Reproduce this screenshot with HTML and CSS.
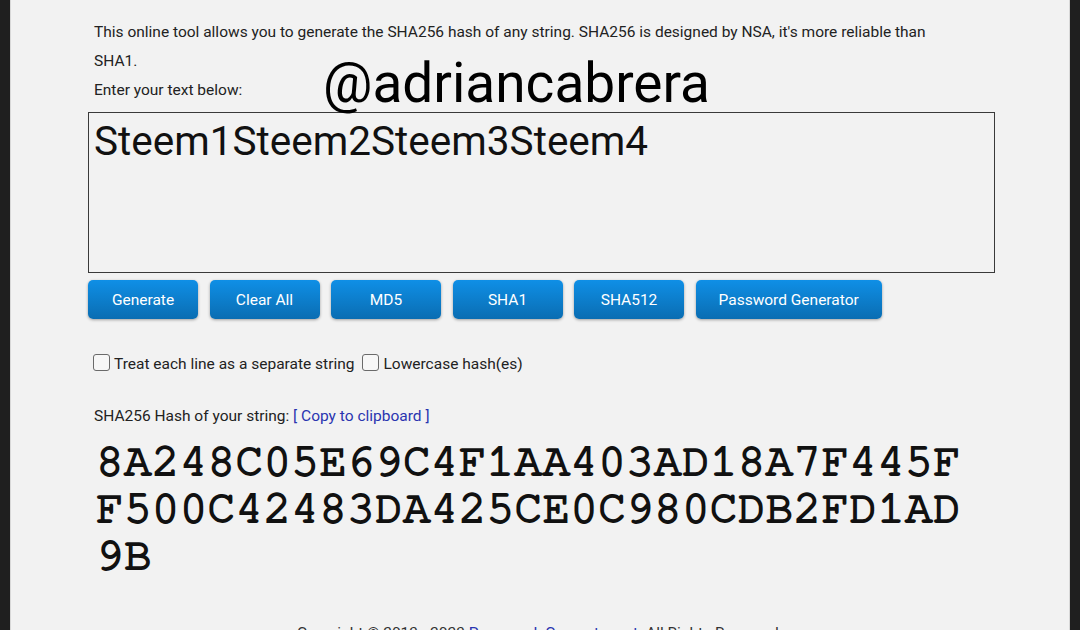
FILE: index.html
```html
<!DOCTYPE html>
<html lang="en">
<head>
<meta charset="utf-8">
<title>SHA256 Hash Generator</title>
<link rel="stylesheet" href="styles.css">
</head>
<body>
<div class="page">
  <div class="content">
    <p class="intro">This online tool allows you to generate the SHA256 hash of any string. SHA256 is designed by NSA, it's more reliable than SHA1.</p>
    <p class="intro">Enter your text below:</p>
    <div class="watermark">@adriancabrera</div>
    <div class="form">
      <div class="textarea">Steem1Steem2Steem3Steem4</div>
      <div class="buttons">
        <span class="btn">Generate</span>
        <span class="btn">Clear All</span>
        <span class="btn">MD5</span>
        <span class="btn">SHA1</span>
        <span class="btn">SHA512</span>
        <span class="btn">Password Generator</span>
      </div>
    </div>
    <div class="options">
      <span class="check"></span><span class="opt-label">Treat each line as a separate string</span>
      <span class="check"></span><span class="opt-label">Lowercase hash(es)</span>
    </div>
    <p class="result-label">SHA256 Hash of your string: <span class="link">[ Copy to clipboard ]</span></p>
    <div class="hash">8A248C05E69C4F1AA403AD18A7F445FF500C42483DA425CE0C980CDB2FD1AD9B</div>
    <div class="footer">Copyright © 2013 - 2023 <span class="link">PasswordsGenerator.net</span>. All Rights Reserved.</div>
  </div>
</div>
</body>
</html>
```

FILE: styles.css
```css
html, body {
  margin: 0;
  padding: 0;
  background: #1f1f1f;
  height: 630px;
  overflow: hidden;
}
.page {
  margin: 0 10px;
  height: 630px;
  background: #f2f2f2;
  overflow: hidden;
  border-left: 1px solid #d8d8d8;
  border-right: 1px solid #d8d8d8;
}
.content {
  position: relative;
  padding: 18px 0 0 77px;
  font-family: Roboto, "Noto Sans", sans-serif;
  font-size: 15.5px;
  color: #222;
}
.intro {
  margin: 0 0 0 6px;
  width: 850px;
  line-height: 29px;
}
.watermark {
  position: absolute;
  left: 312px;
  top: 50px;
  font-size: 55px;
  line-height: 66px;
  color: #000;
}
.form {
  margin-top: 7px;
}
.textarea {
  box-sizing: border-box;
  width: 907px;
  height: 161px;
  border: 1px solid #3a3a3a;
  padding: 6px 5px;
  font-size: 40.5px;
  line-height: 44px;
  color: #111;
}
.buttons {
  display: flex;
  gap: 11.5px;
  margin-top: 7px;
}
.btn {
  box-sizing: border-box;
  min-width: 110px;
  height: 39px;
  padding: 0 23px;
  display: flex;
  align-items: center;
  justify-content: center;
  border-radius: 5px;
  background: linear-gradient(#0f8fe6, #0a6db2);
  box-shadow: 0 1px 3px rgba(0,0,0,0.35);
  color: #fff;
}
.options {
  display: flex;
  align-items: center;
  margin: 35px 0 0 5px;
  color: #222;
}
.check {
  box-sizing: border-box;
  width: 17px;
  height: 17px;
  border: 1px solid #6a6a6a;
  border-radius: 3px;
  background: #f7f7f7;
  margin-top: -3px;
  margin-right: 4px;
}
.opt-label {
  margin-right: 8px;
  line-height: 20px;
}
.result-label {
  margin: 32px 0 0 6px;
  line-height: 20px;
}
.link {
  color: #2a35b0;
}
.hash {
  margin: 12px 0 0 8px;
  width: 880px;
  word-break: break-all;
  font-family: "Nimbus Mono PS", "FreeMono", "Courier New", "Liberation Mono", monospace;
  font-size: 46px;
  line-height: 47px;
  letter-spacing: 0.3px;
  -webkit-text-stroke: 1.9px #111;
  color: #111;
}
.footer {
  margin: 45px 0 0 -77px;
  text-align: center;
  color: #333;
}
```
